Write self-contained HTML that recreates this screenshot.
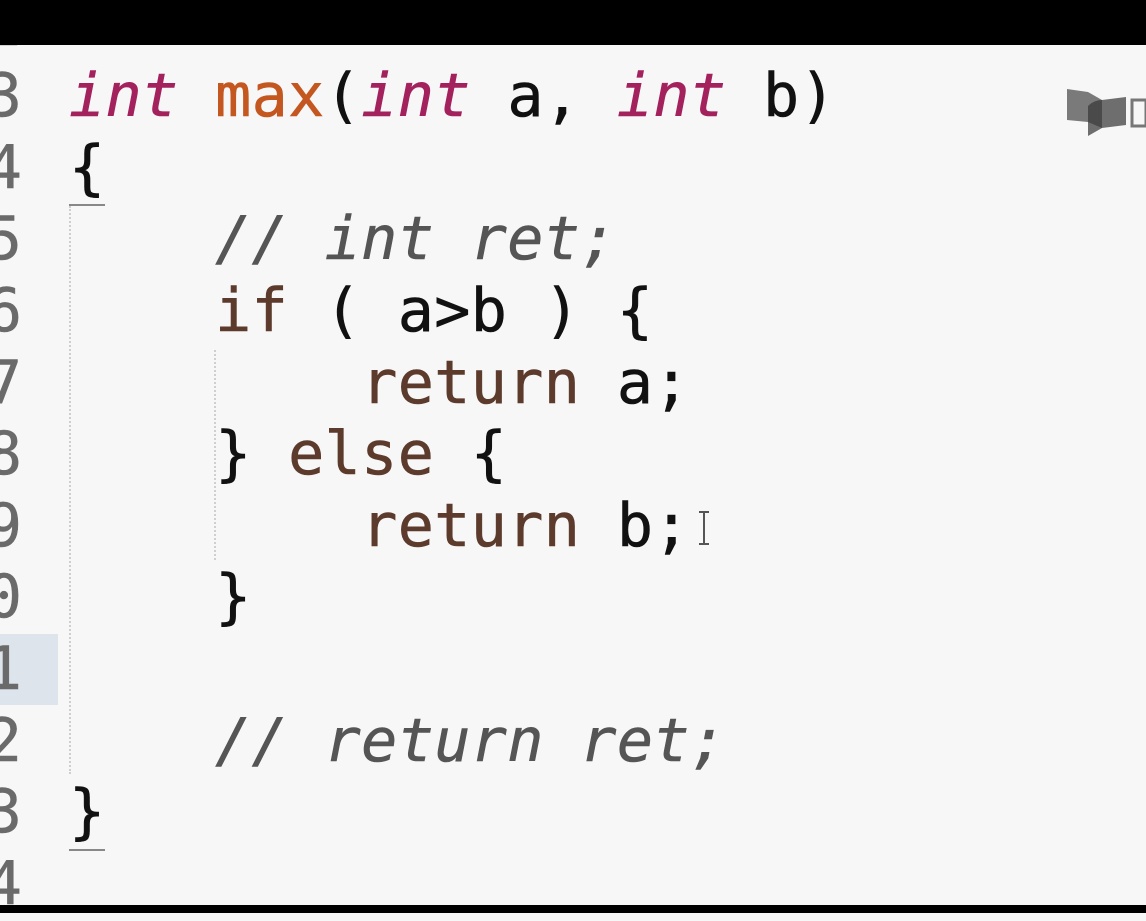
<!DOCTYPE html>
<html><head><meta charset="utf-8"><style>
html,body{margin:0;padding:0;}
body{width:1146px;height:913px;overflow:hidden;background:#f7f7f7;position:relative;font-family:"DejaVu Sans Mono","Liberation Mono",monospace;font-size:60px;}
.top{position:absolute;left:0;top:0;width:1146px;height:45px;background:#000;}
.bot{position:absolute;left:0;top:905px;width:1146px;height:8px;background:#000;}
.hl{position:absolute;left:0;top:634px;width:58px;height:71px;background:#dde4ec;}
.ln{position:absolute;right:1124px;color:#6a6a6a;line-height:71.6px;white-space:pre;-webkit-text-stroke:0.5px #6a6a6a;}
.c{position:absolute;left:69px;line-height:71.6px;white-space:pre;color:#111;letter-spacing:0.4px;-webkit-text-stroke:0.6px currentColor;}
.k{color:#a3215d;font-style:italic;}
.f{color:#c4561f;}
.cm{color:#555;font-style:italic;}
.r{color:#5c3a2c;}
.g{position:absolute;border-left:2px dotted #cfcfcf;}
.u{position:absolute;height:2px;background:#888;}
</style></head><body>
<div class="hl"></div>
<div class="g" style="left:69px;top:206px;height:568px"></div>
<div class="g" style="left:214px;top:350px;height:210px"></div>
<div class="u" style="left:69px;top:204px;width:36px"></div>
<div class="u" style="left:69px;top:849px;width:36px"></div>
<div class="ln" style="top:-10px">2</div>
<div class="ln" style="top:61px">3</div>
<div class="ln" style="top:133px">4</div>
<div class="ln" style="top:204px">5</div>
<div class="ln" style="top:276px">6</div>
<div class="ln" style="top:348px">7</div>
<div class="ln" style="top:419px">8</div>
<div class="ln" style="top:491px">9</div>
<div class="ln" style="top:562px">10</div>
<div class="ln" style="top:634px">11</div>
<div class="ln" style="top:706px">12</div>
<div class="ln" style="top:777px">13</div>
<div class="ln" style="top:849px">14</div>
<div class="c" style="top:61px"><span class="k">int</span> <span class="f">max</span>(<span class="k">int</span> a, <span class="k">int</span> b)</div>
<div class="c" style="top:133px">{</div>
<div class="c" style="top:204px">    <span class="cm">// int ret;</span></div>
<div class="c" style="top:276px">    <span class="r">if</span> ( a&gt;b ) {</div>
<div class="c" style="top:348px">        <span class="r">return</span> a;</div>
<div class="c" style="top:419px">    } <span class="r">else</span> {</div>
<div class="c" style="top:491px">        <span class="r">return</span> b;</div>
<div class="c" style="top:562px">    }</div>
<div class="c" style="top:706px">    <span class="cm">// return ret;</span></div>
<div class="c" style="top:777px">}</div>
<div style="position:absolute;left:703px;top:512px;width:2px;height:32px;background:#555"></div>
<div style="position:absolute;left:699px;top:511px;width:10px;height:2px;background:#555"></div>
<div style="position:absolute;left:699px;top:543px;width:10px;height:2px;background:#555"></div>
<svg style="position:absolute;left:1066px;top:88px" width="80" height="52" viewBox="0 0 80 52">
<path d="M1 1 L22 4 L36 12 L36 40 L22 34 L1 32 Z" fill="#7a7a7a"/>
<path d="M22 18 L36 12 L60 9 L60 37 L36 40 L22 48 Z" fill="#6e6e6e"/>
<path d="M22 18 Q28 12 36 12 L36 40 L22 34 Z" fill="#4a4a4a"/>
<rect x="66" y="12" width="14" height="26" fill="none" stroke="#777" stroke-width="3"/>
</svg>
<div class="top"></div>
<div class="bot"></div>
</body></html>
